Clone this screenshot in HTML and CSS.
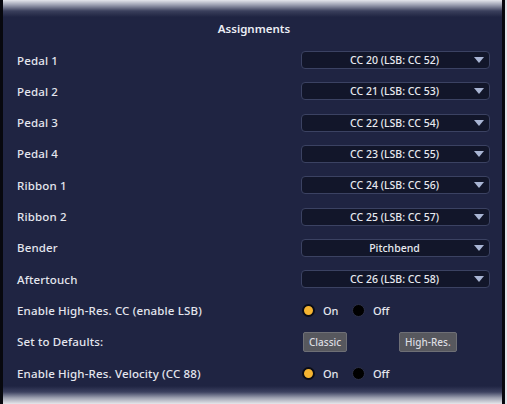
FILE: index.html
```html
<!DOCTYPE html>
<html>
<head>
<meta charset="utf-8">
<link rel="stylesheet" href="styles.css">
</head>
<body>
<div class="window">
  <div class="title">Assignments</div>
  <div class="rows">
    <div class="row"><span class="label">Pedal 1</span><div class="select"><span>CC 20 (LSB: CC 52)</span><i class="arrow"></i></div></div>
    <div class="row"><span class="label">Pedal 2</span><div class="select"><span>CC 21 (LSB: CC 53)</span><i class="arrow"></i></div></div>
    <div class="row"><span class="label">Pedal 3</span><div class="select"><span>CC 22 (LSB: CC 54)</span><i class="arrow"></i></div></div>
    <div class="row"><span class="label">Pedal 4</span><div class="select"><span>CC 23 (LSB: CC 55)</span><i class="arrow"></i></div></div>
    <div class="row"><span class="label">Ribbon 1</span><div class="select"><span>CC 24 (LSB: CC 56)</span><i class="arrow"></i></div></div>
    <div class="row"><span class="label">Ribbon 2</span><div class="select"><span>CC 25 (LSB: CC 57)</span><i class="arrow"></i></div></div>
    <div class="row"><span class="label">Bender</span><div class="select"><span>Pitchbend</span><i class="arrow"></i></div></div>
    <div class="row"><span class="label">Aftertouch</span><div class="select"><span>CC 26 (LSB: CC 58)</span><i class="arrow"></i></div></div>
    <div class="row"><span class="label">Enable High-Res. CC (enable LSB)</span>
      <div class="radios">
        <span class="radio on"></span><span class="rtext">On</span>
        <span class="radio"></span><span class="rtext">Off</span>
      </div>
    </div>
    <div class="row"><span class="label">Set to Defaults:</span>
      <div class="buttons">
        <span class="btn">Classic</span>
        <span class="btn">High-Res.</span>
      </div>
    </div>
    <div class="row"><span class="label">Enable High-Res. Velocity (CC 88)</span>
      <div class="radios">
        <span class="radio on"></span><span class="rtext">On</span>
        <span class="radio"></span><span class="rtext">Off</span>
      </div>
    </div>
  </div>
</div>
</body>
</html>
```

FILE: styles.css
```css
html, body {
  margin: 0;
  padding: 0;
}
body {
  width: 507px;
  height: 404px;
  overflow: hidden;
  background: #e3e5ea;
  font-family: "Noto Sans", "Open Sans", sans-serif;
  color: #e4e6ee;
}
.window {
  box-sizing: border-box;
  width: 505px;
  height: 404px;
  border-left: 3px solid #07080e;
  border-right: 3px solid #07080e;
  background: linear-gradient(to bottom,
    #e4e6ec 0px,
    #9a9eb0 5px,
    #3a3f5c 11px,
    #1f2442 17px,
    #1f2442 386px,
    #3c4160 392px,
    #9ea2b2 398px,
    #e6e7eb 404px);
  padding-top: 20px;
}
.title {
  height: 18px;
  line-height: 18px;
  text-align: center;
  font-size: 11.5px;
  font-weight: 600;
  padding-left: 3px;
  color: #eceef4;
}
.rows {
  margin-top: 6.4px;
  display: grid;
  grid-auto-rows: 31.3px;
}
.row {
  display: flex;
  align-items: center;
  padding-left: 14px;
}
.label {
  width: 284px;
  font-size: 11.5px;
  font-weight: 500;
  letter-spacing: 0.15px;
}
.select {
  box-sizing: border-box;
  width: 189px;
  height: 18px;
  border: 1px solid #3b4262;
  border-radius: 4px;
  background: #12162a;
  display: flex;
  align-items: center;
  justify-content: center;
  position: relative;
  font-size: 10.5px;
  font-weight: 500;
  color: #e8eaf0;
}
.select span {
  padding-right: 2px;
}
.arrow {
  position: absolute;
  right: 5px;
  top: 5px;
  width: 0;
  height: 0;
  border-left: 5px solid transparent;
  border-right: 5px solid transparent;
  border-top: 6px solid #a9b5d4;
}
.radios {
  display: flex;
  align-items: center;
  padding-left: 1px;
}
.radio {
  box-sizing: border-box;
  width: 13px;
  height: 13px;
  border-radius: 50%;
  background: #000;
  border: 1px solid #2c3048;
}
.radio.on {
  background: #f5b431;
  border: 2.5px solid #0b0d16;
}
.rtext {
  font-size: 11px;
  font-weight: 500;
  margin-left: 8px;
  width: 29px;
}
.buttons {
  display: flex;
  align-items: center;
  gap: 52px;
  padding-left: 2px;
}
.btn {
  box-sizing: border-box;
  height: 20px;
  padding: 0 5px;
  line-height: 18px;
  border: 1px solid #6e6f76;
  border-radius: 2px;
  background: #57585e;
  color: #dcdde2;
  font-size: 10px;
  font-weight: 500;
}
```
